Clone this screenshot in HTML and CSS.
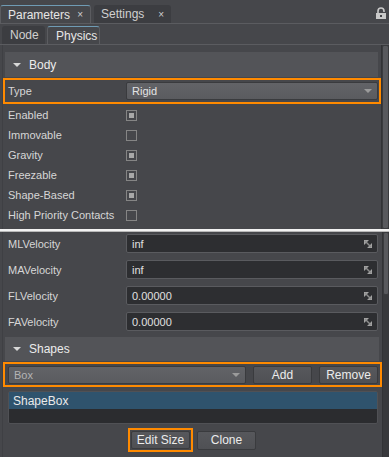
FILE: index.html
```html
<!DOCTYPE html>
<html lang="en">
<head>
    <meta charset="UTF-8">
    <title>Parameters</title>
    <link rel="stylesheet" href="styles.css">
</head>
<body>
    <div class="tabbar top">
        <div class="tab active">Parameters <span class="close">×</span></div>
        <div class="tab">Settings <span class="close">×</span></div>
        <svg class="lock" width="11" height="13" viewBox="0 0 11 13">
            <path d="M2 7 V4 A3 3 0 0 1 8 4 V5" fill="none" stroke="#c9c9c9" stroke-width="1.6"/>
            <rect x="0" y="6" width="10" height="6" fill="#c9c9c9"/>
            <rect x="4" y="8" width="2" height="2" fill="#45464a"/>
        </svg>
    </div>
    <div class="tabbar sub">
        <div class="tab">Node</div>
        <div class="tab active">Physics</div>
    </div>

    <div class="pane upper">
        <div class="content">
            <div class="section-head"><span class="arrow"></span>Body</div>
            <div class="row hl">
                <span class="label">Type</span>
                <div class="combo">Rigid<span class="drop"></span></div>
            </div>
            <div class="row"><span class="label">Enabled</span><span class="check on"></span></div>
            <div class="row"><span class="label">Immovable</span><span class="check"></span></div>
            <div class="row"><span class="label">Gravity</span><span class="check on"></span></div>
            <div class="row"><span class="label">Freezable</span><span class="check on"></span></div>
            <div class="row"><span class="label">Shape-Based</span><span class="check on"></span></div>
            <div class="row"><span class="label">High Priority Contacts</span><span class="check"></span></div>
        </div>
        <div class="scroll"><div class="thumb full"></div></div>
    </div>

    <div class="cut"></div>

    <div class="pane lower">
        <div class="content">
            <div class="row field"><span class="label">MLVelocity</span><div class="input">inf<svg class="spin" width="8" height="8" viewBox="0 0 8 8"><path d="M0 0H5L0 5Z M8 8H3L8 3Z" fill="#a3a3a3"/><path d="M1 1L7 7" stroke="#8d8d8d" stroke-width="1.4"/></svg></div></div>
            <div class="row field"><span class="label">MAVelocity</span><div class="input">inf<svg class="spin" width="8" height="8" viewBox="0 0 8 8"><path d="M0 0H5L0 5Z M8 8H3L8 3Z" fill="#a3a3a3"/><path d="M1 1L7 7" stroke="#8d8d8d" stroke-width="1.4"/></svg></div></div>
            <div class="row field"><span class="label">FLVelocity</span><div class="input">0.00000<svg class="spin" width="8" height="8" viewBox="0 0 8 8"><path d="M0 0H5L0 5Z M8 8H3L8 3Z" fill="#a3a3a3"/><path d="M1 1L7 7" stroke="#8d8d8d" stroke-width="1.4"/></svg></div></div>
            <div class="row field"><span class="label">FAVelocity</span><div class="input">0.00000<svg class="spin" width="8" height="8" viewBox="0 0 8 8"><path d="M0 0H5L0 5Z M8 8H3L8 3Z" fill="#a3a3a3"/><path d="M1 1L7 7" stroke="#8d8d8d" stroke-width="1.4"/></svg></div></div>

            <div class="section-head shapes"><span class="arrow"></span>Shapes</div>
            <div class="shape-bar">
                <div class="combo box">Box<span class="drop"></span></div>
                <button class="btn">Add</button>
                <button class="btn">Remove</button>
            </div>
            <div class="list">
                <div class="item selected">ShapeBox</div>
            </div>
            <div class="actions">
                <div class="hl-btn"><button class="btn">Edit Size</button></div>
                <button class="btn clone">Clone</button>
            </div>
        </div>
        <div class="scroll"><div class="thumb part"></div></div>
    </div>
</body>
</html>
```

FILE: styles.css
```css
* { box-sizing: border-box; }
body { margin: 0; width: 389px; height: 457px; overflow: hidden; background: #46474b; font-family: "Liberation Sans", Arial, sans-serif; font-size: 11px; color: #d8d8d8; }

.tabbar { display: flex; align-items: flex-end; border-bottom: 1px solid #5b5c60; position: relative; }
.tabbar.top { height: 24px; }
.tabbar.sub { height: 21px; padding-left: 2px; gap: 2px; }
.tab { height: 18px; display: flex; align-items: center; padding: 0 7px; background: #3c3d41; color: #d0d0d0; border-radius: 3px 3px 0 0; font-size: 12px; }
.tab.active { background: #46474b; color: #e6e6e6; border: 1px solid #5b5c60; border-top-color: #6f9bb4; border-bottom: none; }
.top .tab { width: 91px; justify-content: space-between; }
.top .tab + .tab { margin-left: 3px; width: 77px; }
.sub .tab { height: 18px; padding: 0 8px; }
.sub .tab:first-child { width: 43px; }
.sub .tab.active { width: 53px; }
.close { font-size: 10px; color: #cfcfcf; }
.lock { position: absolute; right: 2px; top: 7px; }

.pane { display: flex; }
.pane .content { width: 381px; border-left: 1px solid #3f4044; margin-left: 2px; }
.upper { height: 184px; }
.lower { height: 225px; }
.scroll { width: 8px; background: #38393c; border-left: 1px solid #323336; }
.thumb { background: #58595d; border: 1px solid #3a3b3e; border-radius: 2px; }
.thumb.full { height: 100%; }
.thumb.part { height: 63px; }

.cut { height: 3px; background: #f2f2f2; border-bottom: 1px solid #b9b9b9; }

.section-head { margin: 7px 3px 0 2px; height: 25px; background: #535458; display: flex; align-items: center; color: #ececec; font-size: 12px; }
.section-head.shapes { margin-top: 1px; height: 24px; }
.arrow { width: 0; height: 0; border-left: 4px solid transparent; border-right: 4px solid transparent; border-top: 4px solid #d8d8d8; margin: 0 8px 0 8px; }

.row { display: flex; align-items: center; height: 20px; padding-left: 5px; }
.row.hl { height: 26px; margin: 1px 0 1px 0; width: 378px; border: 2px solid #ff8a00; padding-left: 3px; }
.label { width: 118px; flex: none; color: #d6d6d6; }
.combo { height: 18px; flex: 1; margin-right: 1px; display: flex; align-items: center; justify-content: space-between; padding: 0 5px; background: linear-gradient(#626367, #5a5b5f); border: 1px solid #3a3b3e; border-radius: 2px; color: #e4e4e4; }
.drop { width: 0; height: 0; border-left: 4px solid transparent; border-right: 4px solid transparent; border-top: 4px solid #9b9b9b; }
.check { width: 11px; height: 11px; border: 1px solid #858585; padding: 2px; }
.check.on::after { content: ""; display: block; width: 100%; height: 100%; background: #a8a8a8; }

.field { height: 26px; align-items: flex-start; padding-top: 2px; }
.field .label { padding-top: 4px; }
.input { height: 19px; width: 252px; display: flex; align-items: center; justify-content: space-between; padding: 0 5px 0 5px; background: #2d2e31; border: 1px solid #5a5b5f; border-radius: 2px; color: #e0e0e0; }

.shape-bar { display: flex; gap: 7px; margin: 1px 0 0 0; width: 379px; height: 25px; border: 2px solid #ff8a00; padding: 2px 2px 1px 3px; }
.combo.box { flex: none; width: 238px; margin: 0; color: #b4b4b4; }
.btn { width: 59px; height: 18px; padding: 0; background: linear-gradient(#57585c, #4f5054); border: 1px solid #3a3b3e; border-radius: 2px; color: #ececec; font-family: inherit; font-size: 12px; }

.list { margin: 4px 0 0 5px; width: 370px; height: 33px; background: #2b2c2f; border: 1px solid #505155; border-radius: 2px; }
.item { height: 17px; padding-left: 4px; display: flex; align-items: center; font-size: 12px; color: #eaeaea; }
.item.selected { background: #2f536d; }

.actions { display: flex; align-items: center; margin: 4px 0 0 125px; gap: 4px; }
.hl-btn { border: 2px solid #ff8a00; padding: 1px; }
.btn.clone { height: 19px; }
```
